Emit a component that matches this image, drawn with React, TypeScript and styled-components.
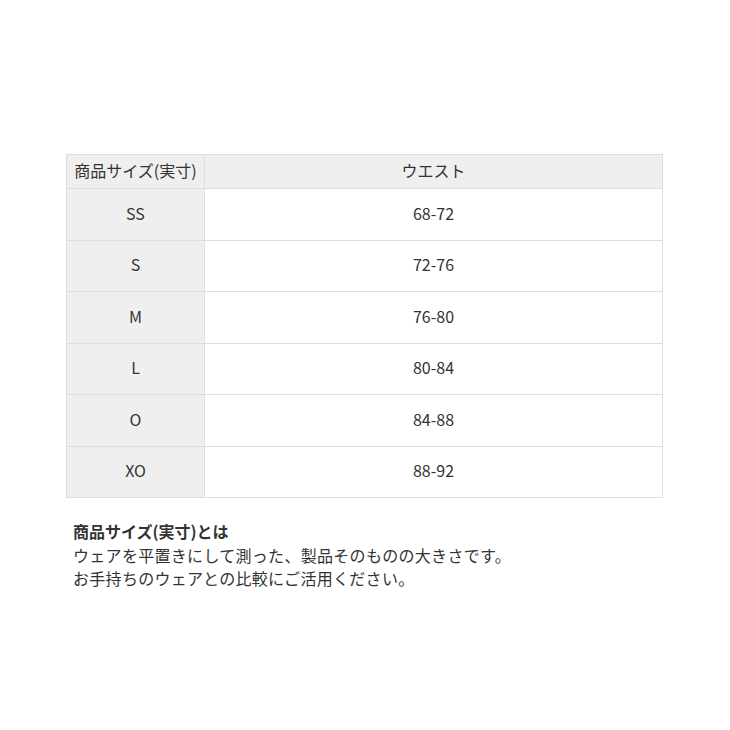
import React from "react";
import styled, { createGlobalStyle } from "styled-components";

const Global = createGlobalStyle`
  html, body { margin: 0; padding: 0; background: #fff; }
  body { font-family: "Noto Sans CJK JP", "Noto Sans", sans-serif; color: #333; }
`;

const Page = styled.div`
  width: 730px;
  height: 730px;
  padding: 154px 0 0 66px;
  box-sizing: border-box;
`;

const Table = styled.table`
  width: 597px;
  border-collapse: collapse;
  font-size: 16px;
  color: #333;
`;

const Cell = styled.td<{ $head?: boolean; $side?: boolean }>`
  border: 1px solid #dedede;
  text-align: center;
  height: ${(p) => (p.$head ? "30px" : "47.5px")};
  padding: 0 0 3px 0;
  width: ${(p) => (p.$side ? "137px" : "auto")};
  background: ${(p) => (p.$head || p.$side ? "#efefef" : "#fff")};
  line-height: 1;
`;

const Notes = styled.div`
  margin-top: 22px;
  padding-left: 7px;
  font-size: 16px;
  line-height: 23.5px;
  letter-spacing: 0.3px;
  color: #333;
`;

const NoteTitle = styled.div`
  font-weight: bold;
  letter-spacing: 0;
`;

const rows = [
  ["SS", "68-72"],
  ["S", "72-76"],
  ["M", "76-80"],
  ["L", "80-84"],
  ["O", "84-88"],
  ["XO", "88-92"],
];

export default function App() {
  return (
    <>
      <Global />
      <Page>
        <Table>
          <tbody>
            <tr>
              <Cell $head $side>商品サイズ(実寸)</Cell>
              <Cell $head>ウエスト</Cell>
            </tr>
            {rows.map(([s, w]) => (
              <tr key={s}>
                <Cell $side>{s}</Cell>
                <Cell>{w}</Cell>
              </tr>
            ))}
          </tbody>
        </Table>
        <Notes>
          <NoteTitle>商品サイズ(実寸)とは</NoteTitle>
          <div>ウェアを平置きにして測った、製品そのものの大きさです。</div>
          <div>お手持ちのウェアとの比較にご活用ください。</div>
        </Notes>
      </Page>
    </>
  );
}
